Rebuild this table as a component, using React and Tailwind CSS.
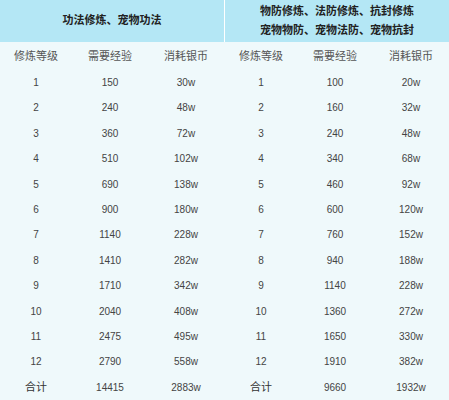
import React from "react";

const left = [
  ["1", "150", "30w"],
  ["2", "240", "48w"],
  ["3", "360", "72w"],
  ["4", "510", "102w"],
  ["5", "690", "138w"],
  ["6", "900", "180w"],
  ["7", "1140", "228w"],
  ["8", "1410", "282w"],
  ["9", "1710", "342w"],
  ["10", "2040", "408w"],
  ["11", "2475", "495w"],
  ["12", "2790", "558w"],
  ["合计", "14415", "2883w"],
];

const right = [
  ["1", "100", "20w"],
  ["2", "160", "32w"],
  ["3", "240", "48w"],
  ["4", "340", "68w"],
  ["5", "460", "92w"],
  ["6", "600", "120w"],
  ["7", "760", "152w"],
  ["8", "940", "188w"],
  ["9", "1140", "228w"],
  ["10", "1360", "272w"],
  ["11", "1650", "330w"],
  ["12", "1910", "382w"],
  ["合计", "9660", "1932w"],
];

const cols = "grid grid-cols-[72px_76px_76px]";

// one half of the picture: title band, column heads, rows
const Half = ({ title, rows }) => (
  <div className="w-[224px] flex flex-col">
    <div className="h-[42px] bg-[#b4e7f5] flex flex-col items-center justify-center text-[11px] font-bold text-[#222] leading-[19px]">
      {title.map((t) => (
        <div key={t}>{t}</div>
      ))}
    </div>
    <div className={`${cols} h-[28px] items-center text-center text-[11px] text-[#555]`}>
      <div>修炼等级</div>
      <div>需要经验</div>
      <div>消耗银币</div>
    </div>
    {rows.map((r) => (
      <div
        key={r[0]}
        className={`${cols} h-[25.5px] items-center text-center text-[10px] text-[#444]`}
      >
        <div className={r[0] === "合计" ? "text-[11px] text-[#333]" : ""}>{r[0]}</div>
        <div>{r[1]}</div>
        <div>{r[2]}</div>
      </div>
    ))}
  </div>
);

export default function App() {
  return (
    <div
      className="w-[449px] h-[400px] bg-[#eff9fb] flex overflow-hidden"
      style={{ fontFamily: '"Liberation Sans", "Noto Sans CJK SC", sans-serif' }}
    >
      <Half title={["功法修炼、宠物功法"]} rows={left} />
      <div className="w-px">
        <div className="h-[42px] bg-white" />
      </div>
      <Half
        title={["物防修炼、法防修炼、抗封修炼", "宠物物防、宠物法防、宠物抗封"]}
        rows={right}
      />
    </div>
  );
}
